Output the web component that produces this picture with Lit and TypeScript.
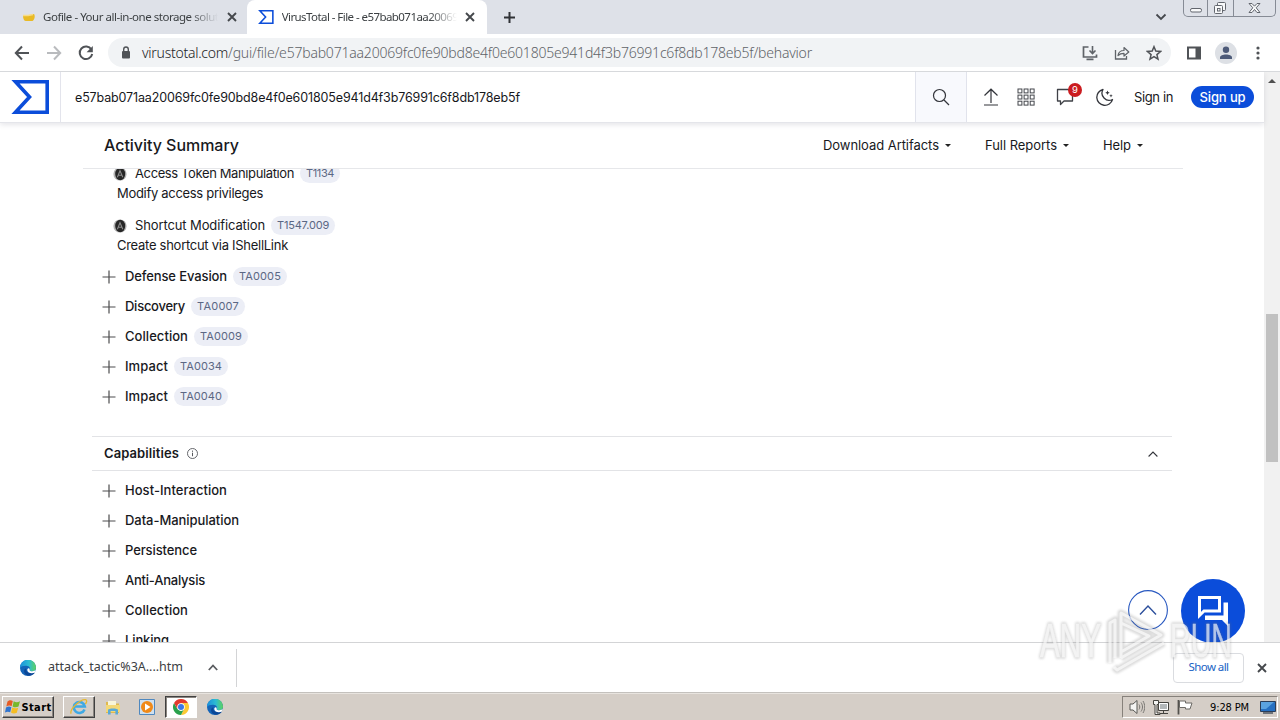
import { LitElement, html, css, svg } from 'lit';
import { customElement, property } from 'lit/decorators.js';

const HASH = 'e57bab071aa20069fc0fe90bd8e4f0e601805e941d4f3b76991c6f8db178eb5f';

// Spaces the letters of a label so that it fills a given width
@customElement('fit-text')
export class FitText extends LitElement {
    @property({ type: Number }) width = 0;

    static styles = css`
        :host {
            display: inline-block;
            white-space: pre;
            flex: none;
        }

        .run {
            display: inline-block;
        }
    `;

    render() {
        return html`<span class="run"><slot></slot></span>`;
    }

    firstUpdated() {
        const run = this.renderRoot.querySelector('.run') as HTMLElement;
        const count = (this.textContent || '').length;
        const natural = run.getBoundingClientRect().width;
        if (count && this.width) {
            run.style.letterSpacing = `${(this.width - natural) / count}px`;
            this.style.width = `${this.width}px`;
        }
    }
}

const edgeIcon = html`
    <svg width="16" height="16" viewBox="0 0 16 16">
        <defs>
            <linearGradient id="top" x1="0" x2="1">
                <stop offset="0" stop-color="#1b8fdc" />
                <stop offset=".55" stop-color="#2cbcd2" />
                <stop offset="1" stop-color="#5fd35c" />
            </linearGradient>
        </defs>
        <circle cx="8" cy="8" r="8" fill="#1464b8" />
        <path d="M0 8a8 8 0 0 1 16-.6c0 2.400-1.600 3.800-3.700 3.800-2 0-3-.7-2.700-1.400.9-1.300.4-3.600-2.300-3.900C4 5.600 1 6.200 0 8z" fill="url(#top)" />
        <path d="M6.200 8.300c-.9 3.200 2.200 5.800 7.600 4.200 1-.3 1.200.2.700.8-3 3.400-8.300 3-10-.3-1-2.300 0-4.200 1.700-4.700z" fill="#0c4797" />
        <path d="M9.600 9.800c-.4.900.8 1.500 2.700 1.500 1.600 0 2.700-.5 3.500-1.700l-.9 2.900c-3 1.400-7.300.6-7.600-2.200-.1-1 .4-1.700 1.200-2 1.200 0 1.300.8 1.100 1.500z" fill="#fff" />
    </svg>
`;

const plusIcon = html`
    <svg class="plus" width="14" height="14" viewBox="0 0 14 14">
        <path d="M7 .5v13M.5 7h13" stroke="#4c4c4e" stroke-width="1.200" />
    </svg>
`;

const attackIcon = html`
    <svg class="attack" width="14" height="14" viewBox="0 0 14 14">
        <circle cx="7" cy="7" r="6.600" fill="#b4b4b4" />
        <ellipse cx="7.200" cy="7" rx="5" ry="6.200" fill="#262626" />
        <path d="M4.400 10.300 7 3.800l2.800 6.500M5.100 8.300h3.800" fill="none" stroke="#8c8c8c" stroke-width="1.100" />
    </svg>
`;

const sigma = (size: number, w: number) => html`
    <svg width=${size * 38 / 34} height=${size} viewBox="0 0 38 34">
        <path d="M4.500 ${w / 2}H${38 - w / 2}V${34 - w / 2}H4.500L18.500 17z" fill="none" stroke="#0b4dda" stroke-width=${w} />
    </svg>
`;

const closeIcon = (size = 10) => html`
    <svg width=${size} height=${size} viewBox="0 0 10 10">
        <path d="M1 1l8 8M9 1l-8 8" stroke="#45484c" stroke-width="1.900" />
    </svg>
`;

@customElement('browser-chrome')
export class BrowserChrome extends LitElement {
    static styles = css`
        :host {
            display: block;
            height: 72px;
            flex: none;
            font-family: "Noto Sans", sans-serif;
            color: #3c4043;
        }

        svg {
            display: block;
            flex: none;
        }

        .tabs {
            height: 34px;
            background: #dee1e8;
            display: flex;
            align-items: center;
        }

        .tab {
            height: 34px;
            display: flex;
            align-items: center;
            font-size: 11.5px;
            box-sizing: border-box;
        }

        .idle {
            width: 239px;
            padding-left: 22px;
            gap: 6px;
        }

        .active {
            width: 240px;
            margin-left: 8px;
            padding-left: 11px;
            gap: 8px;
            background: #fff;
            border-radius: 8px 8px 0 0;
        }

        .title {
            overflow: hidden;
            white-space: nowrap;
            width: 175px;
            margin-bottom: 2px;
            -webkit-mask-image: linear-gradient(90deg, #000 84%, transparent);
            mask-image: linear-gradient(90deg, #000 84%, transparent);
        }

        .idle .title {
            margin-left: 1px;
            margin-right: 3px;
        }

        .new {
            margin-left: 16px;
        }

        .chevron {
            margin-left: auto;
            margin-right: 16px;
        }

        .window {
            align-self: flex-start;
            display: flex;
            height: 16px;
            width: 91px;
            border: 1px solid #868b95;
            border-top: 0;
            border-radius: 0 0 5px 5px;
            margin-right: 4px;
        }

        .bar {
            height: 37px;
            background: #fff;
            border-bottom: 1px solid #d7d9dc;
            display: flex;
            align-items: center;
        }

        .nav {
            display: flex;
            width: 108px;
            padding-left: 14px;
            gap: 16px;
            box-sizing: border-box;
        }

        .url {
            width: 1063px;
            height: 29px;
            border-radius: 15px;
            background: #f1f3f5;
            display: flex;
            align-items: center;
            padding: 0 9px 0 13px;
            box-sizing: border-box;
            font-size: 14px;
            font-weight: 300;
            color: #5f6368;
        }

        .url .lock {
            margin-right: 11px;
        }

        .host {
            color: #202124;
        }

        .actions {
            margin-left: auto;
            display: flex;
            gap: 16px;
        }

        .end {
            display: flex;
            align-items: center;
            padding-left: 15px;
            gap: 13px;
        }

        .more {
            margin-left: -3px;
        }
    `;

    render() {
        return html`
            <div class="tabs">
                <div class="tab idle">
                    <svg width="14" height="14" viewBox="0 0 14 14">
                        <path d="M1 5.500h5l6-1.500c1.500 2 .5 6-1.500 7H4C2 11 1 9 1 5.500z" fill="#e9ba25" />
                        <path d="M1 5.500h5l5-1" stroke="#f7dc88" stroke-width="1.500" fill="none" />
                    </svg>
                    <div class="title"><fit-text width="178">Gofile - Your all-in-one storage soluti</fit-text></div>
                    ${closeIcon()}
                </div>
                <div class="tab active">
                    ${sigma(14, 3.8)}
                    <div class="title"><fit-text width="180">VirusTotal - File - e57bab071aa20069f</fit-text></div>
                    ${closeIcon()}
                </div>
                <svg class="new" width="13" height="13" viewBox="0 0 13 13"><path d="M6.500 1v11M1 6.500h11" stroke="#303236" stroke-width="2" /></svg>
                <svg class="chevron" width="12" height="8" viewBox="0 0 12 8"><path d="M1.500 1.500 6 6l4.500-4.500" fill="none" stroke="#45484d" stroke-width="1.800" /></svg>
                <div class="window">
                    <svg width="91" height="16" viewBox="0 0 91 16">
                        <g fill="#f8f9fa" stroke="#62666e">
                            <path d="M23.500 0v16M49.500 0v16" stroke="#868b95" />
                            <rect x="6.500" y="8.500" width="11" height="3.500" rx="1.500" />
                            <rect x="33.500" y="2.500" width="8" height="8" rx="1" />
                            <rect x="30.500" y="5.500" width="8" height="8" rx="1" />
                            <rect x="33.500" y="8.500" width="2.500" height="2.500" />
                            <path d="M65 3.500h3l2.500 2.700L73 3.500h3l-3.800 4.300 3.800 4.700h-3l-2.500-3-2.500 3h-3l3.800-4.700z" />
                        </g>
                    </svg>
                </div>
            </div>
            <div class="bar">
                <div class="nav">
                    <svg width="16" height="16" viewBox="0 0 16 16"><path d="M15 8H2M8 1.500 1.800 8 8 14.500" fill="none" stroke="#505357" stroke-width="2" /></svg>
                    <svg width="16" height="16" viewBox="0 0 16 16"><path d="M1 8h13M8 1.500 14.200 8 8 14.500" fill="none" stroke="#b9bbbe" stroke-width="2" /></svg>
                    <svg width="16" height="16" viewBox="0 0 16 16"><path d="M13.400 4.500A6.300 6.300 0 1 0 14.200 9" fill="none" stroke="#505357" stroke-width="2" /><path d="M14.800 1v6.200H8.600z" fill="#505357" /></svg>
                </div>
                <div class="url">
                    <svg class="lock" width="10" height="13" viewBox="0 0 10 13"><rect x="1" y="5" width="8" height="7.500" rx="1" fill="#505357" /><path d="M2.700 5.500V3.300a2.300 2.300 0 0 1 4.600 0v2.200" fill="none" stroke="#505357" stroke-width="1.400" /></svg>
                    <fit-text class="host" width="86">virustotal.com</fit-text><fit-text width="584">/gui/file/${HASH}/behavior</fit-text>
                    <div class="actions">
                        <svg width="16" height="16" viewBox="0 0 16 16"><path d="M6.500 2h-5v10h13V9.500M4.500 14.300h7" fill="none" stroke="#5f6368" stroke-width="1.700" /><path d="M10.500 1v7M7.500 5.500l3 3 3-3" fill="none" stroke="#5f6368" stroke-width="1.600" /></svg>
                        <svg width="16" height="16" viewBox="0 0 16 16"><path d="M1.500 5v9h11v-3" fill="none" stroke="#5f6368" stroke-width="1.300" /><path d="M4 10.500c.5-3.500 2.500-5 6-5V2.500L14.800 7 10 11V8.300c-2.500 0-4.300.5-6 2.200z" fill="none" stroke="#5f6368" stroke-width="1.200" stroke-linejoin="round" /></svg>
                        <svg width="16" height="16" viewBox="0 0 16 16"><path d="M8 1.700l1.800 4.400 4.700.4-3.600 3.100 1.100 4.600L8 11.700l-4 2.500 1.100-4.600L1.500 6.500l4.700-.4z" fill="none" stroke="#505357" stroke-width="1.500" /></svg>
                    </div>
                </div>
                <div class="end">
                    <svg width="16" height="16" viewBox="0 0 16 16"><path d="M1 1.500h14v13H1z" fill="#505357" /><path d="M3 3.500h6.500v9H3z" fill="#fff" /></svg>
                    <svg width="22" height="22" viewBox="0 0 22 22"><circle cx="11" cy="11" r="11" fill="#dde0e5" /><circle cx="11" cy="7.800" r="3.200" fill="#4d5a78" /><path d="M5 17v-1.500c0-4 12-4 12 0V17z" fill="#4d5a78" /></svg>
                    <svg class="more" width="22" height="16" viewBox="0 0 22 16"><g fill="#505357"><circle cx="11" cy="3" r="1.600" /><circle cx="11" cy="8" r="1.600" /><circle cx="11" cy="13" r="1.600" /></g></svg>
                </div>
            </div>
        `;
    }
}

@customElement('vt-header')
export class VtHeader extends LitElement {
    static styles = css`
        :host {
            display: flex;
            align-items: stretch;
            height: 50px;
            flex: none;
            background: #fff;
            border-bottom: 1px solid #e4e5ea;
            box-shadow: 0 2px 5px rgba(60, 60, 90, .13);
            font-family: Inter, sans-serif;
            font-size: 13px;
            color: #17181c;
            z-index: 1;
        }

        svg {
            display: block;
        }

        .logo {
            width: 61px;
            border-right: 1px solid #e3e4ec;
            padding: 8px 0 0 11px;
            box-sizing: border-box;
        }

        .query {
            width: 854px;
            padding-left: 14px;
            box-sizing: border-box;
            display: flex;
            align-items: center;
            font-size: 12.5px;
        }

        .search {
            width: 52px;
            box-sizing: border-box;
            border: solid #e1e3ec;
            border-width: 0 1px;
            background: #f8f9fd;
            display: grid;
            place-items: center;
            padding-right: 1px;
        }

        .tools {
            display: flex;
            align-items: center;
            padding-left: 15px;
        }

        .tools > * {
            flex: none;
        }

        .grid {
            margin-left: 17px;
        }

        .comments {
            position: relative;
            margin-left: 21px;
        }

        .badge {
            position: absolute;
            left: 12px;
            top: -5px;
            width: 14px;
            height: 14px;
            border-radius: 7px;
            background: #cb1c20;
            color: #fff;
            font-size: 9.5px;
            line-height: 14px;
            text-align: center;
        }

        .moon {
            margin-left: 22px;
        }

        .signin {
            margin-left: 20px;
        }

        .signup {
            margin-left: 18px;
            width: 63px;
            height: 22px;
            border-radius: 11px;
            background: #0b4dda;
            color: #fff;
            font-weight: 500;
            display: flex;
            justify-content: center;
            align-items: center;
        }
    `;

    render() {
        const cells = [0, 1, 2, 3, 4, 5, 6, 7, 8];
        return html`
            <div class="logo">${sigma(34, 3.6)}</div>
            <div class="query"><fit-text width="445">${HASH}</fit-text></div>
            <div class="search">
                <svg width="18" height="18" viewBox="0 0 18 18"><circle cx="7.500" cy="7.500" r="6" fill="none" stroke="#33353b" stroke-width="1.200" /><path d="M12 12l5 5" stroke="#33353b" stroke-width="1.300" /></svg>
            </div>
            <div class="tools">
                <svg width="18" height="18" viewBox="0 0 18 18"><path d="M9 15V1.200M2.500 7.500 9 1.200l6.500 6.300M2 17h14" fill="none" stroke="#33353b" stroke-width="1.200" /></svg>
                <svg class="grid" width="18" height="18" viewBox="0 0 18 18">
                    ${cells.map((i) => svg`<rect x=${1 + (i % 3) * 6.1} y=${1 + Math.floor(i / 3) * 6.1} width="3.900" height="3.900" fill="none" stroke="#44464c" />`)}
                </svg>
                <div class="comments">
                    <svg width="18" height="18" viewBox="0 0 18 18"><path d="M1.500 1.500h15v11.500H8l-3.500 3.500V13h-3z" fill="none" stroke="#3f4147" stroke-width="1.300" stroke-linejoin="round" /></svg>
                    <div class="badge">9</div>
                </div>
                <svg class="moon" width="18" height="18" viewBox="0 0 18 18"><path d="M7 1.500A8 8 0 1 0 16.500 11.500 7.200 7.200 0 0 1 7 1.500z" fill="none" stroke="#33353b" stroke-width="1.300" stroke-linejoin="round" /><path d="M11.500 2.500l.7 1.500 1.500.7-1.500.7-.7 1.500-.7-1.500-1.500-.7 1.500-.7zM15 6l.5 1.200 1.200.5-1.200.5L15 9.400l-.5-1.200-1.200-.5 1.200-.5z" fill="#33353b" /></svg>
                <fit-text class="signin" width="39">Sign in</fit-text>
                <div class="signup"><fit-text width="46">Sign up</fit-text></div>
            </div>
        `;
    }
}

interface Tactic {
    name: string;
    width: number;
    id?: string;
}

@customElement('vt-report')
export class VtReport extends LitElement {
    static styles = css`
        :host {
            display: flex;
            flex-direction: column;
            flex: 1;
            min-height: 0;
            font-family: Inter, sans-serif;
            font-size: 13px;
            color: #18191d;
            background: #fff;
        }

        svg {
            display: block;
            flex: none;
        }

        fit-text {
            margin-bottom: 2px;
        }

        .toolbar {
            height: 45px;
            flex: none;
            margin: 0 81px 0 83px;
            border-bottom: 1px solid #e6e7ea;
            display: flex;
            align-items: center;
            padding-left: 21px;
        }

        .heading {
            font-size: 16px;
            font-weight: 500;
            margin-right: auto;
        }

        .menu {
            display: flex;
            align-items: center;
            gap: 6px;
            margin-right: 34px;
        }

        .menu fit-text {
            margin-bottom: 1px;
        }

        .menu:last-child {
            margin-right: 40px;
        }

        .caret {
            border: 3px solid transparent;
            border-top-color: #222;
            border-bottom: 0;
        }

        .body {
            flex: 1;
            min-height: 0;
            overflow: hidden;
            padding: 0 92px;
        }

        .technique {
            height: 20px;
            padding-left: 21px;
            display: flex;
            align-items: center;
        }

        .attack {
            margin-right: 8px;
        }

        .technique:first-child {
            margin-top: -5px;
        }

        .detail {
            height: 20px;
            line-height: 18px;
            padding-left: 25px;
            margin-bottom: 12px;
        }

        .detail.last {
            margin-bottom: 6px;
        }

        .tag {
            margin-left: 6px;
            margin-bottom: 1px;
            height: 19px;
            padding: 0 6px;
            border-radius: 10px;
            background: #eceef6;
            color: #5b6784;
            font-size: 11px;
            display: flex;
            align-items: center;
        }

        .tag fit-text {
            margin-bottom: 1px;
        }

        .tactic {
            height: 30px;
            padding-left: 10px;
            display: flex;
            align-items: center;
            font-weight: 500;
        }

        .tactic .tag {
            font-weight: 400;
        }

        .plus {
            margin-right: 9px;
        }

        .section {
            height: 33px;
            margin: 24px 0 5px;
            border: solid #e2e3e6;
            border-width: 1px 0;
            padding: 0 12px;
            display: flex;
            align-items: center;
            font-weight: 600;
        }

        .info {
            margin-left: 8px;
        }

        .collapse {
            margin-left: auto;
            margin-right: 2px;
        }
    `;

    tactics: Tactic[] = [
        { name: 'Defense Evasion', width: 102, id: 'TA0005' },
        { name: 'Discovery', width: 60, id: 'TA0007' },
        { name: 'Collection', width: 63, id: 'TA0009' },
        { name: 'Impact', width: 43, id: 'TA0034' },
        { name: 'Impact', width: 43, id: 'TA0040' },
    ];

    capabilities: Tactic[] = [
        { name: 'Host-Interaction', width: 102 },
        { name: 'Data-Manipulation', width: 114 },
        { name: 'Persistence', width: 72 },
        { name: 'Anti-Analysis', width: 80 },
        { name: 'Collection', width: 63 },
        { name: 'Linking', width: 44 },
    ];

    menu(label: string, width: number) {
        return html`<div class="menu"><fit-text width=${width}>${label}</fit-text><span class="caret"></span></div>`;
    }

    technique(name: string, width: number, id: string, idWidth: number) {
        return html`
            <div class="technique">
                ${attackIcon}<fit-text width=${width}>${name}</fit-text>
                <span class="tag"><fit-text width=${idWidth}>${id}</fit-text></span>
            </div>
        `;
    }

    tactic(t: Tactic) {
        return html`
            <div class="tactic">
                ${plusIcon}<fit-text width=${t.width}>${t.name}</fit-text>
                ${t.id ? html`<span class="tag"><fit-text width="42">${t.id}</fit-text></span>` : ''}
            </div>
        `;
    }

    render() {
        return html`
            <div class="toolbar">
                <fit-text class="heading" width="135">Activity Summary</fit-text>
                ${this.menu('Download Artifacts', 116)}
                ${this.menu('Full Reports', 72)}
                ${this.menu('Help', 28)}
            </div>
            <div class="body">
                ${this.technique('Access Token Manipulation', 159, 'T1134', 28)}
                <div class="detail"><fit-text width="146">Modify access privileges</fit-text></div>
                ${this.technique('Shortcut Modification', 130, 'T1547.009', 52)}
                <div class="detail last"><fit-text width="171">Create shortcut via IShellLink</fit-text></div>
                ${this.tactics.map((t) => this.tactic(t))}
                <div class="section">
                    <fit-text width="75">Capabilities</fit-text>
                    <svg class="info" width="11" height="11" viewBox="0 0 11 11"><circle cx="5.500" cy="5.500" r="5" fill="none" stroke="#55575c" stroke-width=".9" /><path d="M5.500 4.700v3.500M5.500 2.600v1.200" stroke="#55575c" /></svg>
                    <svg class="collapse" width="10" height="6" viewBox="0 0 10 6"><path d="M.6 5.500 5 1l4.400 4.500" fill="none" stroke="#33353b" stroke-width="1.100" /></svg>
                </div>
                ${this.capabilities.map((t) => this.tactic(t))}
            </div>
        `;
    }
}

@customElement('download-shelf')
export class DownloadShelf extends LitElement {
    static styles = css`
        :host {
            display: flex;
            align-items: center;
            height: 49px;
            flex: none;
            background: #fff;
            border-top: 1px solid #d3d4d6;
            border-bottom: 1px solid #c4c1bd;
            font-family: "Noto Sans", sans-serif;
            font-size: 12.5px;
            color: #3c4043;
        }

        svg {
            display: block;
        }

        .item {
            width: 216px;
            height: 38px;
            border-right: 1px solid #d3d4d6;
            padding-left: 20px;
            display: flex;
            align-items: center;
        }

        .name {
            margin: 0 25px 2px 12px;
        }

        .all {
            margin-left: auto;
            width: 69px;
            height: 28px;
            border: 1px solid #dadce0;
            border-radius: 4px;
            color: #1a63c4;
            font-size: 11.5px;
            display: flex;
            justify-content: center;
            align-items: center;
        }

        .all fit-text {
            margin-bottom: 2px;
        }

        .close {
            margin: 0 13px 0 13px;
        }
    `;

    render() {
        return html`
            <div class="item">
                ${edgeIcon}
                <fit-text class="name" width="135">attack_tactic%3A....htm</fit-text>
                <svg width="10" height="7" viewBox="0 0 10 7"><path d="M.8 6 5 1.500 9.200 6" fill="none" stroke="#5a5c60" stroke-width="1.800" /></svg>
            </div>
            <div class="all"><fit-text width="40">Show all</fit-text></div>
            <div class="close">${closeIcon()}</div>
        `;
    }
}

@customElement('task-bar')
export class TaskBar extends LitElement {
    static styles = css`
        :host {
            display: flex;
            align-items: center;
            height: 27px;
            box-sizing: border-box;
            flex: none;
            background: #d5cec7;
            border-top: 1px solid #e8e4df;
            padding-left: 2px;
            font-family: "DejaVu Sans Condensed", "Noto Sans", sans-serif;
            font-size: 11px;
            color: #000;
        }

        svg {
            display: block;
            flex: none;
        }

        .start,
        .app {
            height: 22px;
            box-sizing: border-box;
            display: flex;
            align-items: center;
            justify-content: center;
        }

        .start,
        .raised {
            border: 1px solid;
            border-color: #fff #404040 #404040 #fff;
            box-shadow: inset -1px -1px #8a8580;
        }

        .start {
            width: 52px;
            gap: 1px;
            font-weight: 700;
            margin-right: 9px;
        }

        .app {
            width: 32px;
            margin-right: 2px;
        }

        .pressed {
            background: #fff;
            border: 1px solid;
            border-color: #404040 #fff #fff #404040;
            box-shadow: inset 1px 1px #8a8580;
        }

        .tray {
            margin-left: auto;
            width: 156px;
            height: 22px;
            border: 1px solid;
            border-color: #86817b #fff #fff #86817b;
            box-sizing: border-box;
            display: flex;
            align-items: center;
            padding-left: 6px;
            margin-right: 2px;
            gap: 8px;
        }

        .clock {
            margin-left: 9px;
            margin-right: 3px;
        }
    `;

    render() {
        return html`
            <div class="start">
                <svg width="16" height="16" viewBox="0 0 16 16">
                    <path d="M2.500 2.500C4.500.8 6 1 7.800 2L6.600 7.200C5 6.300 3.300 6.400 1.300 7.500z" fill="#e65b24" />
                    <path d="M8.700 2.300c2 1.300 4 1.200 6.300 0L13.500 7.600c-2 1-4 1-5.900-.1z" fill="#77b82c" />
                    <path d="M1 8.500c2-1.200 3.700-1.200 5.400-.3L5.200 13.300C3.500 12.400 2 12.400 0 13.500z" fill="#2f74cf" />
                    <path d="M7.300 8.600c2 1 3.900 1 5.900.1l-1.400 5c-2 1-4 1-5.800-.1z" fill="#f5bd23" />
                </svg>
                <fit-text width="30">Start</fit-text>
            </div>
            <div class="app raised">
                <svg width="18" height="18" viewBox="0 0 18 18">
                    <path d="M14.500 11.500a5.500 5.500 0 1 1 .3-3H5" fill="none" stroke="#3fa9e4" stroke-width="2.600" />
                    <path d="M1.200 15.700C-1 12 10 1 15.500 1.700c2 .6 1 3-.2 4.300" fill="none" stroke="#e6b830" stroke-width="1.300" />
                </svg>
            </div>
            <div class="app">
                <svg width="16" height="16" viewBox="0 0 16 16">
                    <path d="M1 3h5l1 1.500h7V14H1z" fill="#dfb94f" />
                    <path d="M3 2h8v5H3z" fill="#f8f5d9" />
                    <path d="M1 6h14v7H1z" fill="#f3d877" />
                    <path d="M3 15.500v-4.500c0-2 10-2 10 0v4.500h-2.600V12H5.600v3.500z" fill="#5aa9d6" />
                </svg>
            </div>
            <div class="app">
                <svg width="16" height="16" viewBox="0 0 16 16">
                    <path d="M.5.5h15v15H.5z" fill="#cfe0ef" stroke="#4f88bf" />
                    <circle cx="8" cy="8" r="6" fill="#f08918" />
                    <path d="M6 4.500 11.500 8 6 11.500z" fill="#fff" />
                </svg>
            </div>
            <div class="app pressed">
                <svg width="16" height="16" viewBox="0 0 16 16">
                    <path d="M8 4h6.930A8 8 0 0 1 8 16l3-6z" fill="#fcc934" />
                    <path d="M1.070 4 4.500 10 8 12l3-2-3 6A8 8 0 0 1 1.070 4z" fill="#2aa14c" />
                    <path d="M1.070 4A8 8 0 0 1 14.930 4H8L4.500 10z" fill="#e33b2e" />
                    <circle cx="8" cy="8" r="3.800" fill="#fff" />
                    <circle cx="8" cy="8" r="3" fill="#3b78e7" />
                </svg>
            </div>
            <div class="app">${edgeIcon}</div>
            <div class="tray">
                <svg width="16" height="16" viewBox="0 0 16 16"><path d="M1 5h3l4-3.500v13L4 11H1z" fill="#f4f4f2" stroke="#595855" /><path d="M10 5.500c1 1.500 1 3.500 0 5M12 3.500c2 3 2 6 0 9M14 2c2.300 4 2.300 8 0 12" fill="none" stroke="#797773" /></svg>
                <svg width="16" height="16" viewBox="0 0 16 16"><path d="M5.500 3.500h10v8h-10z" fill="#b3b7b9" stroke="#45433f" /><path d="M6.500 4.500h8v6h-8z" fill="none" stroke="#fff" /><path d="M7 14.500h8M10.500 12v2" stroke="#45433f" /><path d="M.5 1.500h5v4h-1.500v8.500h3v1.500H2V5.500H.5z" fill="#f4f4f2" stroke="#45433f" /></svg>
                <svg width="16" height="16" viewBox="0 0 16 16"><path d="M1.500 1v14.500" stroke="#53514d" stroke-width="1.800" /><path d="M2.500 2h6v2h6.500l-2 6H8.500V8.500h-6z" fill="#fff" stroke="#6b6965" /></svg>
                <fit-text class="clock" width="39">9:28 PM</fit-text>
                <svg width="16" height="14" viewBox="0 0 16 14"><path d="M.5 1.500h15v10H.5z" fill="#2670c1" stroke="#2b3d57" /><path d="M1 2h13L6 9H1z" fill="#5ba3df" /><path d="M3 13h10" stroke="#4b5560" stroke-width="1.500" /></svg>
            </div>
        `;
    }
}

@customElement('app-root')
export class AppRoot extends LitElement {
    static styles = css`
        :host {
            display: flex;
            flex-direction: column;
            position: relative;
            width: 1280px;
            height: 720px;
            overflow: hidden;
            background: #fff;
        }

        svg {
            display: block;
        }

        .viewport {
            display: flex;
            flex: 1;
            min-height: 0;
            position: relative;
            overflow: hidden;
        }

        .page {
            width: 1264px;
            display: flex;
            flex-direction: column;
        }

        .scrollbar {
            width: 16px;
            background: #f1f1f1;
            display: flex;
            flex-direction: column;
            align-items: center;
        }

        .up {
            border: 4px solid transparent;
            border-top: 0;
            border-bottom-color: #505050;
            margin-top: 7px;
        }

        .thumb {
            width: 12px;
            height: 148px;
            margin-top: 231px;
            background: #c1c1c1;
        }

        /* floating buttons over the report */
        .totop {
            position: absolute;
            left: 1128px;
            top: 518px;
        }

        .chat {
            position: absolute;
            left: 1181px;
            top: 507px;
        }

        .watermark {
            position: absolute;
            left: 1030px;
            top: 600px;
            pointer-events: none;
        }

        .shade {
            filter: blur(1.2px);
            opacity: .24;
        }

        .brand {
            font-family: "Liberation Sans", sans-serif;
            font-size: 49px;
            stroke-width: inherit;
        }

        .shape {
            fill: none;
        }
    `;

    // Same shapes are drawn twice: a grey shadow, then the white face
    mark(color: string, text: number, line: number) {
        return svg`
            <g fill=${color} stroke=${color} stroke-linejoin="round">
                <g stroke-width=${text}>
                    <text class="brand" x="10" y="57" textLength="61" lengthAdjust="spacingAndGlyphs">ANY</text>
                    <text class="brand" x="140" y="57" textLength="62" lengthAdjust="spacingAndGlyphs">RUN</text>
                </g>
                <path class="shape" d="M80 63V23l5-3v38M91 58V13l40 22-40 23M91 23l28 13-28 16M84 67l3 3 47-27" stroke-width=${line} />
            </g>
        `;
    }

    render() {
        return html`
            <browser-chrome></browser-chrome>
            <div class="viewport">
                <div class="page">
                    <vt-header></vt-header>
                    <vt-report></vt-report>
                </div>
                <div class="scrollbar"><div class="up"></div><div class="thumb"></div></div>
                <svg class="totop" width="40" height="40" viewBox="0 0 40 40"><circle cx="20" cy="20" r="19.400" fill="#fff" stroke="#2858c0" stroke-width="1.100" /><path d="M12 24.500 20 16l8 8.500" fill="none" stroke="#2c4f9c" stroke-width="1.400" /></svg>
                <svg class="chat" width="64" height="64" viewBox="0 0 64 64"><circle cx="32" cy="32" r="32" fill="#0b4dda" /><path d="M18.500 18.500h20v13.500H23l-4.500 4.500z" fill="none" stroke="#fff" stroke-width="3" /><path d="M42.500 23.500h4.500v23.500l-6-6H24v-4.500h18.500z" fill="#fff" /></svg>
            </div>
            <download-shelf></download-shelf>
            <task-bar></task-bar>
            <svg class="watermark" width="215" height="80" viewBox="0 0 215 80">
                <g class="shade">${this.mark('#707070', 4, 7)}</g>
                <g opacity=".66">${this.mark('#fff', 0.4, 3)}</g>
            </svg>
        `;
    }
}
